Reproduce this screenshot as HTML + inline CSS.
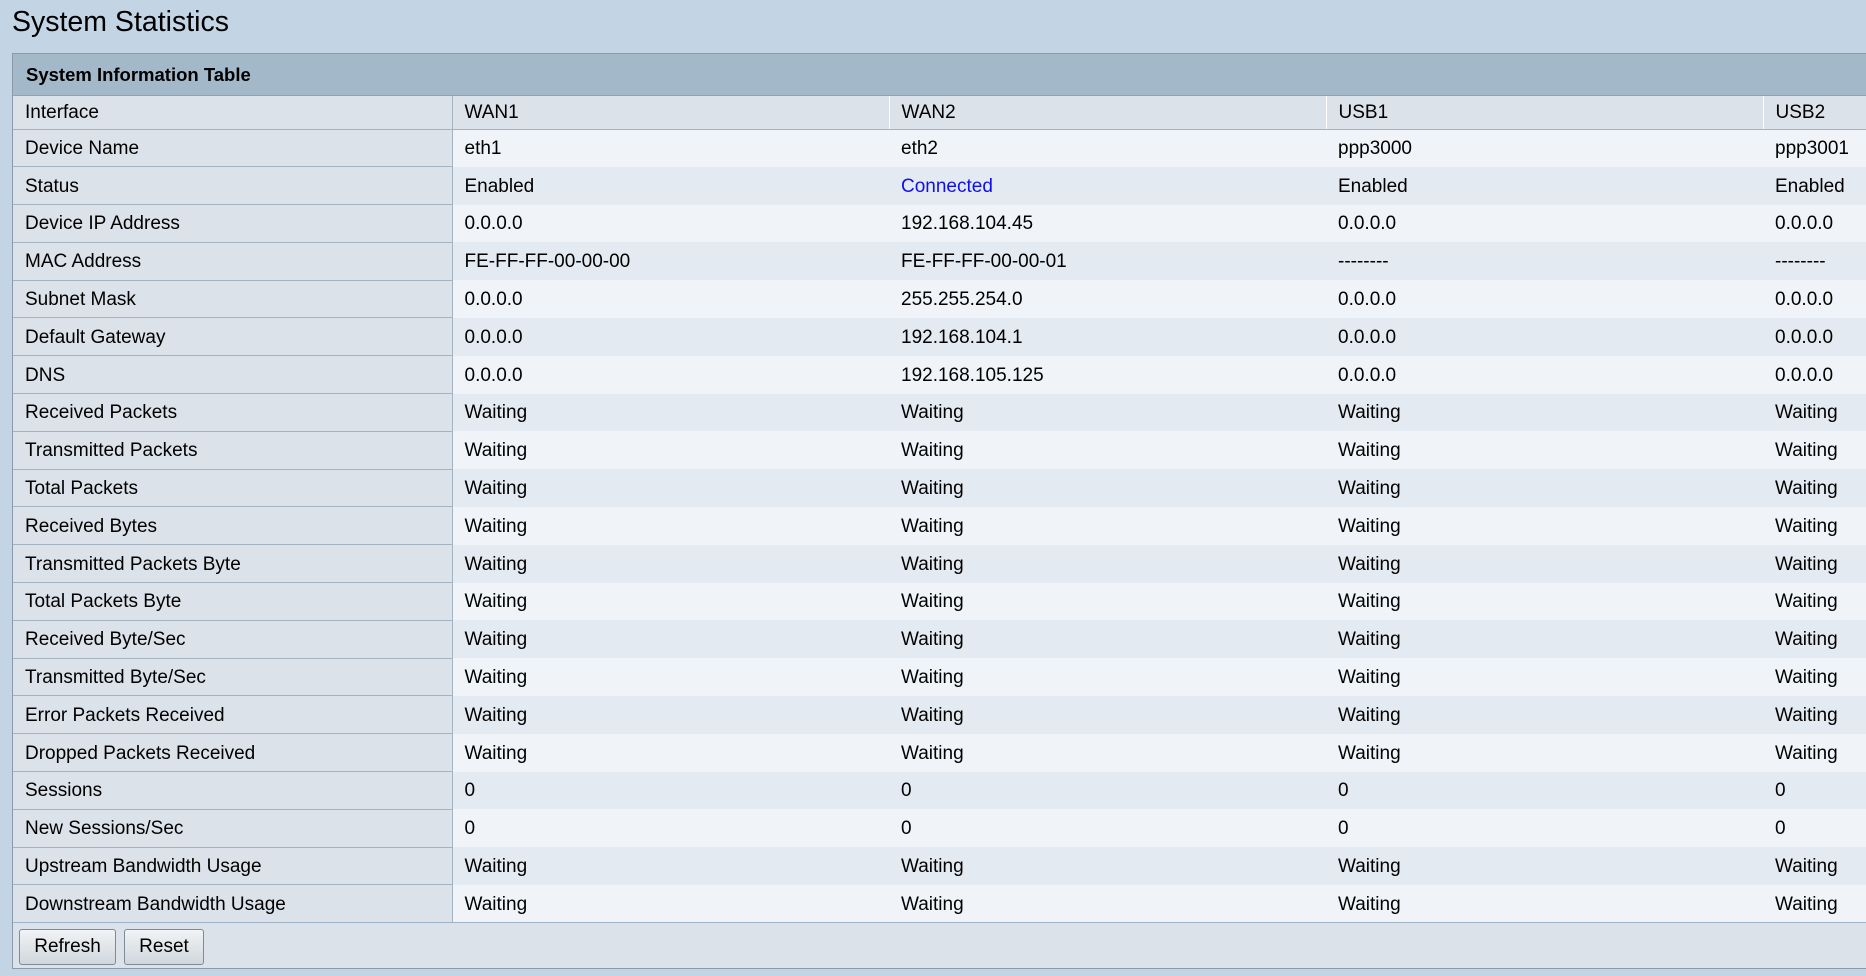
<!DOCTYPE html>
<html><head><meta charset="utf-8"><style>
html,body{margin:0;padding:0;}
body{width:1866px;height:976px;background:#c3d5e5;font-family:"Liberation Sans",Arial,sans-serif;overflow:hidden;position:relative;color:#000;}
h1{position:absolute;left:12px;top:6px;margin:0;font-weight:normal;font-size:28.5px;}
.box{position:absolute;left:12px;top:53px;width:1880px;height:914px;border:1px solid #8a9aa8;border-right:none;background:#dbe2e9;}
.hdr{height:42px;background:#a3b8c8;border-bottom:1px solid #8fa3b3;font-weight:bold;font-size:18.5px;line-height:42px;padding-left:13px;box-sizing:border-box;}
table{border-collapse:collapse;table-layout:fixed;width:1950px;font-size:19px;position:absolute;left:0;top:42px;}
td{padding:2px 0 0 12px;height:37.8px;box-sizing:border-box;white-space:nowrap;overflow:hidden;}
td.l{background:#dbe2e9;border-bottom:1px solid #a3b3c1;border-right:1px solid #a3b3c1;}
tr.i td{height:33px;background:#dbe2e9;border-bottom:1px solid #a3b3c1;border-right:1px solid #fff;}
tr.i td.l{border-right:1px solid #a3b3c1;}
tr.a td.c{background:#f0f4f8;}
tr.b td.c{background:#e3eaf1;}
tr.last td{border-bottom:1px solid #9fb3c4;}
.blue{color:#1010ee;}
.foot{position:absolute;left:0;top:869px;width:100%;height:46px;}
.btn{position:absolute;top:6px;height:36px;border:1px solid #7f8a94;border-radius:3px;background:linear-gradient(#f2f4f6,#d0d6dc);font-size:19px;line-height:34px;text-align:center;box-sizing:border-box;}
</style></head><body>
<h1>System Statistics</h1>
<div class="box">
<div class="hdr">System Information Table</div>
<table>
<colgroup><col style="width:439px"><col style="width:437px"><col style="width:437px"><col style="width:437px"><col style="width:200px"></colgroup>
<tr class="i"><td class="l">Interface</td><td class="c">WAN1</td><td class="c">WAN2</td><td class="c">USB1</td><td class="c">USB2</td></tr>
<tr class="a"><td class="l">Device Name</td><td class="c">eth1</td><td class="c">eth2</td><td class="c">ppp3000</td><td class="c">ppp3001</td></tr>
<tr class="b"><td class="l">Status</td><td class="c">Enabled</td><td class="c blue">Connected</td><td class="c">Enabled</td><td class="c">Enabled</td></tr>
<tr class="a"><td class="l">Device IP Address</td><td class="c">0.0.0.0</td><td class="c">192.168.104.45</td><td class="c">0.0.0.0</td><td class="c">0.0.0.0</td></tr>
<tr class="b"><td class="l">MAC Address</td><td class="c">FE-FF-FF-00-00-00</td><td class="c">FE-FF-FF-00-00-01</td><td class="c">--------</td><td class="c">--------</td></tr>
<tr class="a"><td class="l">Subnet Mask</td><td class="c">0.0.0.0</td><td class="c">255.255.254.0</td><td class="c">0.0.0.0</td><td class="c">0.0.0.0</td></tr>
<tr class="b"><td class="l">Default Gateway</td><td class="c">0.0.0.0</td><td class="c">192.168.104.1</td><td class="c">0.0.0.0</td><td class="c">0.0.0.0</td></tr>
<tr class="a"><td class="l">DNS</td><td class="c">0.0.0.0</td><td class="c">192.168.105.125</td><td class="c">0.0.0.0</td><td class="c">0.0.0.0</td></tr>
<tr class="b"><td class="l">Received Packets</td><td class="c">Waiting</td><td class="c">Waiting</td><td class="c">Waiting</td><td class="c">Waiting</td></tr>
<tr class="a"><td class="l">Transmitted Packets</td><td class="c">Waiting</td><td class="c">Waiting</td><td class="c">Waiting</td><td class="c">Waiting</td></tr>
<tr class="b"><td class="l">Total Packets</td><td class="c">Waiting</td><td class="c">Waiting</td><td class="c">Waiting</td><td class="c">Waiting</td></tr>
<tr class="a"><td class="l">Received Bytes</td><td class="c">Waiting</td><td class="c">Waiting</td><td class="c">Waiting</td><td class="c">Waiting</td></tr>
<tr class="b"><td class="l">Transmitted Packets Byte</td><td class="c">Waiting</td><td class="c">Waiting</td><td class="c">Waiting</td><td class="c">Waiting</td></tr>
<tr class="a"><td class="l">Total Packets Byte</td><td class="c">Waiting</td><td class="c">Waiting</td><td class="c">Waiting</td><td class="c">Waiting</td></tr>
<tr class="b"><td class="l">Received Byte/Sec</td><td class="c">Waiting</td><td class="c">Waiting</td><td class="c">Waiting</td><td class="c">Waiting</td></tr>
<tr class="a"><td class="l">Transmitted Byte/Sec</td><td class="c">Waiting</td><td class="c">Waiting</td><td class="c">Waiting</td><td class="c">Waiting</td></tr>
<tr class="b"><td class="l">Error Packets Received</td><td class="c">Waiting</td><td class="c">Waiting</td><td class="c">Waiting</td><td class="c">Waiting</td></tr>
<tr class="a"><td class="l">Dropped Packets Received</td><td class="c">Waiting</td><td class="c">Waiting</td><td class="c">Waiting</td><td class="c">Waiting</td></tr>
<tr class="b"><td class="l">Sessions</td><td class="c">0</td><td class="c">0</td><td class="c">0</td><td class="c">0</td></tr>
<tr class="a"><td class="l">New Sessions/Sec</td><td class="c">0</td><td class="c">0</td><td class="c">0</td><td class="c">0</td></tr>
<tr class="b"><td class="l">Upstream Bandwidth Usage</td><td class="c">Waiting</td><td class="c">Waiting</td><td class="c">Waiting</td><td class="c">Waiting</td></tr>
<tr class="a last"><td class="l">Downstream Bandwidth Usage</td><td class="c">Waiting</td><td class="c">Waiting</td><td class="c">Waiting</td><td class="c">Waiting</td></tr>
</table>
<div class="foot">
<div class="btn" style="left:6px;width:97px;">Refresh</div>
<div class="btn" style="left:111px;width:80px;">Reset</div>
</div>
</div>
</body></html>
